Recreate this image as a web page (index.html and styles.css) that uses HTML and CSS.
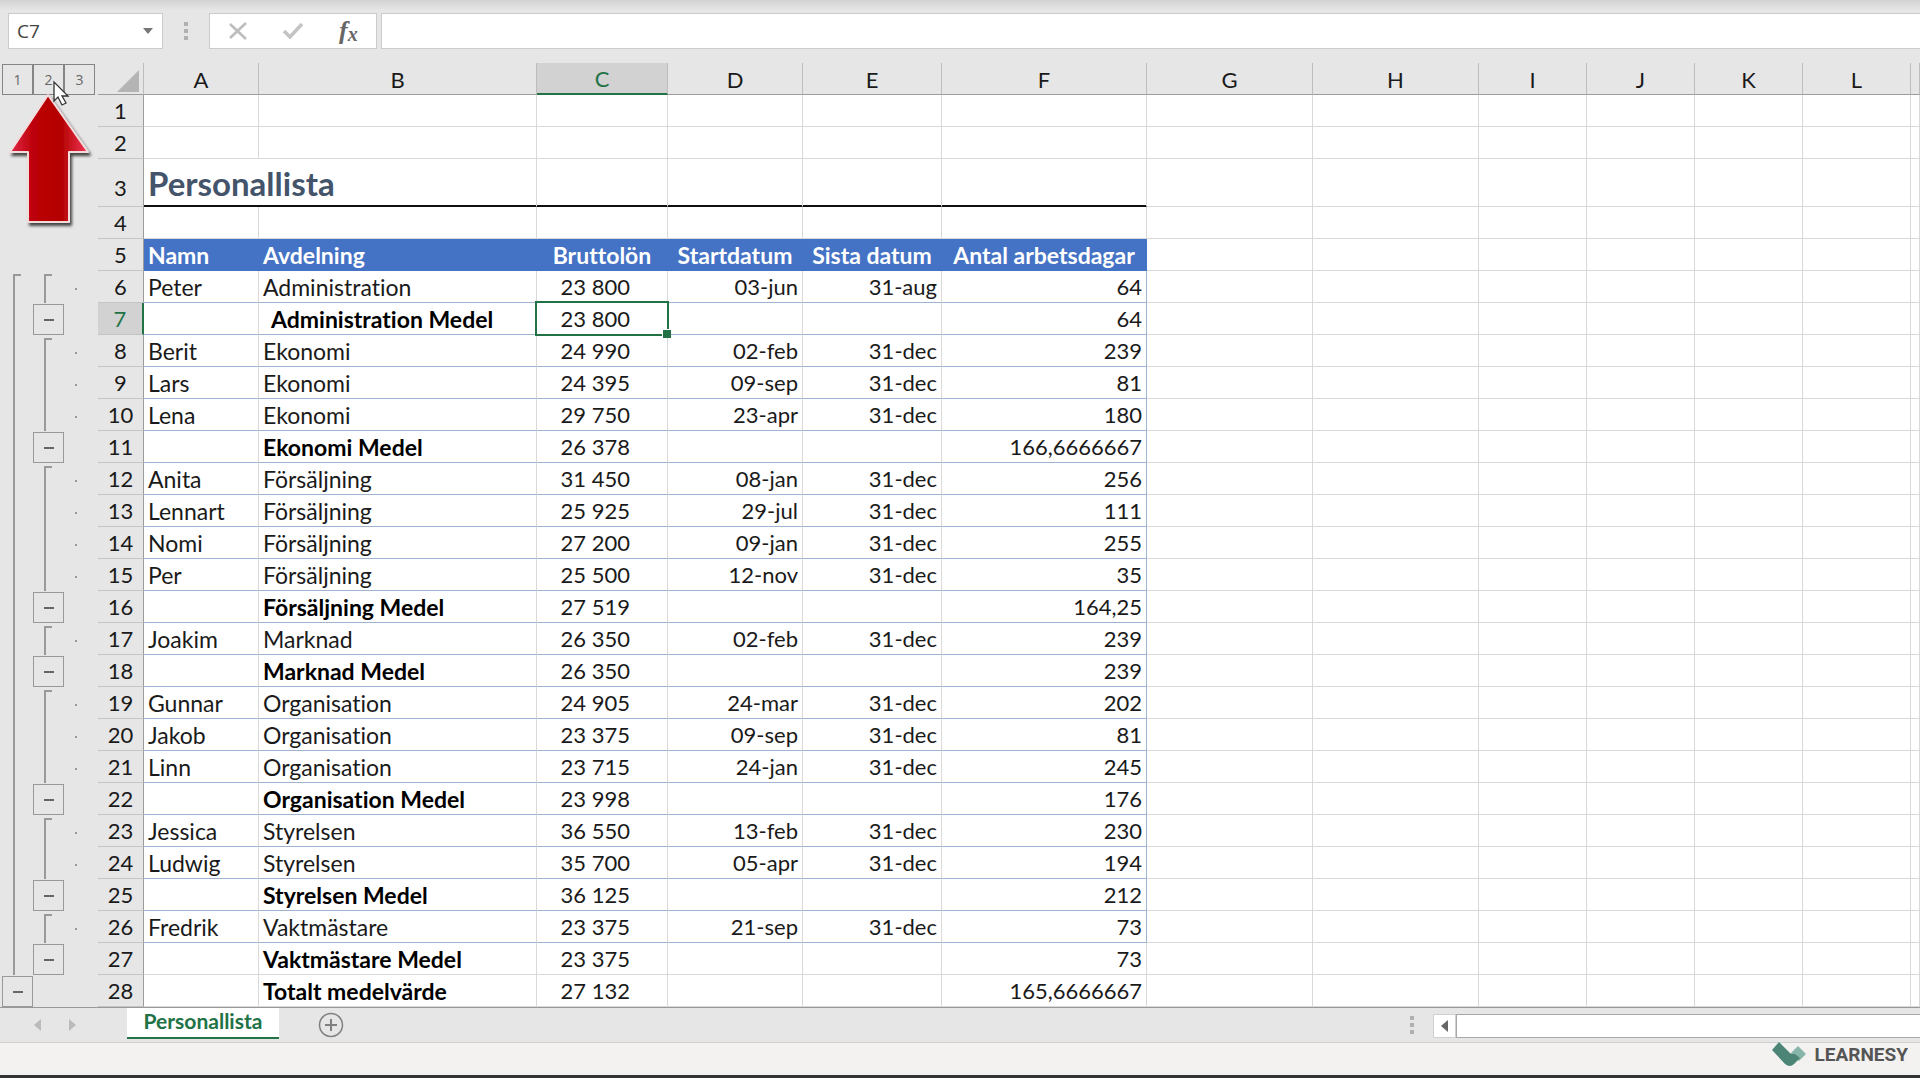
FILE: index.html
```html
<!DOCTYPE html>
<html lang="sv">
<head>
    <meta charset="UTF-8">
    <meta name="viewport" content="width=device-width, initial-scale=1.0">
    <title>Personallista</title>
    <link rel="stylesheet" href="styles.css">
</head>
<body>
    <header class="formula-bar">
        <div class="name-box">
            <input type="text" class="name-input" value="C7" aria-label="Namnruta">
            <button type="button" class="name-toggle" aria-label="Visa namn">
                <svg width="10" height="6" viewBox="0 0 10 6"><path d="M0 0h10L5 6z" fill="#777"/></svg>
            </button>
        </div>
        <div class="grip"><i></i><i></i><i></i></div>
        <div class="formula-buttons">
            <button type="button" aria-label="Avbryt">
                <svg width="20" height="18" viewBox="0 0 20 18"><path d="M2 2l16 15M18 1L2 16" fill="none" stroke="#bdbdbd" stroke-width="2.6"/></svg>
            </button>
            <button type="button" aria-label="Retur">
                <svg width="22" height="18" viewBox="0 0 22 18"><path d="M2 9l6 6L20 2" fill="none" stroke="#c4c4c4" stroke-width="3.6"/></svg>
            </button>
            <button type="button" class="fx" aria-label="Infoga funktion"><i>f</i><i class="fx-x">x</i></button>
        </div>
        <input type="text" class="formula-input" aria-label="Formelfält">
    </header>

    <main class="sheet">
        <aside class="outline">
            <div class="levels">
                <button type="button">1</button>
                <button type="button">2</button>
                <button type="button">3</button>
            </div>
            <div class="groups" id="groups"></div>
            <svg class="red-arrow" width="92" height="142" viewBox="0 0 92 142">
                <defs>
                    <linearGradient id="red" x1="0" x2="1" y1="0" y2="0">
                        <stop offset="0" stop-color="#e0284a"/>
                        <stop offset="0.3" stop-color="#bd0008"/>
                        <stop offset="0.65" stop-color="#b30000"/>
                        <stop offset="1" stop-color="#f03858"/>
                    </linearGradient>
                    <filter id="shadow" x="-20%" y="-20%" width="150%" height="150%">
                        <feDropShadow dx="2" dy="3" stdDeviation="1.5" flood-color="#000" flood-opacity="0.7"/>
                    </filter>
                </defs>
                <path d="M42 2L82 59H63v70H22V59H4z" fill="url(#red)" stroke="#f3dcdc" stroke-width="2" stroke-linejoin="round" filter="url(#shadow)"/>
            </svg>
            <svg class="cursor" width="18" height="26" viewBox="0 0 18 26">
                <path d="M2 2v19l4-4 4 8 4-2-4-7h6z" fill="#fff" stroke="#333" stroke-width="1.3"/>
            </svg>
        </aside>

        <table class="grid">
            <colgroup>
                <col class="w-head"><col class="w-a"><col class="w-b"><col class="w-c"><col class="w-d"><col class="w-e"><col class="w-f">
                <col class="w-g"><col class="w-g"><col class="w-i"><col class="w-i"><col class="w-i"><col class="w-i"><col>
            </colgroup>
            <thead>
                <tr>
                    <th class="corner"><svg width="22" height="22" viewBox="0 0 22 22"><path d="M22 0v22H0z" fill="#b4b4b4"/></svg></th>
                    <th>A</th><th>B</th><th class="selected">C</th><th>D</th><th>E</th><th>F</th>
                    <th>G</th><th>H</th><th>I</th><th>J</th><th>K</th><th>L</th><th></th>
                </tr>
            </thead>
            <tbody id="rows"></tbody>
        </table>
    </main>

    <footer>
        <div class="sheet-bar">
            <div class="tab-nav">
                <button type="button" aria-label="Föregående blad"><svg width="7" height="12" viewBox="0 0 7 12"><path d="M7 0v12L0 6z" fill="#bbb"/></svg></button>
                <button type="button" aria-label="Nästa blad"><svg width="7" height="12" viewBox="0 0 7 12"><path d="M0 0v12l7-6z" fill="#bbb"/></svg></button>
            </div>
            <button type="button" class="tab">Personallista</button>
            <button type="button" class="add-sheet" aria-label="Nytt blad">
                <svg width="26" height="26" viewBox="0 0 26 26" fill="none" stroke="#808080"><circle cx="13" cy="13" r="11.5" stroke-width="1.5"/><path d="M13 7v12M7 13h12" stroke-width="2"/></svg>
            </button>
            <div class="grip grip-scroll"><i></i><i></i><i></i></div>
            <button type="button" class="scroll-left" aria-label="Rulla åt vänster"><svg width="7" height="12" viewBox="0 0 7 12"><path d="M7 0v12L0 6z" fill="#666"/></svg></button>
            <div class="scroll-track"></div>
        </div>
        <div class="status-bar">
            <div class="brand">
                <svg width="34" height="24" viewBox="0 0 34 24">
                    <path d="M18 12l8-8 8 8-7 7z" fill="#88b5a9"/>
                    <path d="M0 8l7-8 12 12h4l5 4-6 6q-4 4-9 0z" fill="#4c8576"/>
                </svg>
                <span>LEARNESY</span>
            </div>
        </div>
        <div class="taskbar"><div class="taskbar-item"></div></div>
    </footer>
    <script src="script.js"></script>
</body>
</html>
```
FILE: styles.css
```css
* {
    box-sizing: border-box;
}
body {
    margin: 0;
    min-height: 100vh;
    display: flex;
    flex-direction: column;
    background: #e6e6e6;
    color: #1a1a1a;
    font-family: Lato, Carlito, Calibri, sans-serif;
    font-size: 22px;
    font-variant-ligatures: none;
    overflow: hidden;
}
button {
    padding: 0;
    border: 0;
    background: none;
    color: inherit;
    font: inherit;
    display: flex;
    align-items: center;
    justify-content: center;
}
svg {
    display: block;
}

/* Formula bar */
.formula-bar {
    display: flex;
    height: 63px;
    padding: 13px 0 14px 8px;
    background: linear-gradient(#d2d2d2, #e6e6e6 10px);
}
.name-box,
.formula-buttons {
    display: flex;
    background: #fff;
    border: 1px solid #cbcbcb;
}
.name-box {
    width: 155px;
}
.name-input {
    flex: 1;
    min-width: 0;
    padding: 0 0 0 8px;
    border: 0;
    background: none;
    color: #444;
    font-family: "Open Sans", sans-serif;
    font-size: 19px;
}
.name-toggle {
    width: 28px;
}
.grip {
    display: flex;
    flex-direction: column;
    justify-content: center;
    align-items: center;
    gap: 3px;
    width: 46px;
}
.grip i {
    width: 4px;
    height: 4px;
    background: #b0b0b0;
}
.formula-buttons {
    width: 168px;
}
.formula-buttons button {
    flex: 1;
}
.fx {
    color: #666;
    font-family: "Liberation Serif", serif;
    font-size: 26px;
    font-weight: bold;
    line-height: 30px;
}
.fx-x {
    font-size: 20px;
    padding-top: 6px;
}
.formula-input {
    flex: 1;
    margin-left: 4px;
    border: 1px solid #cbcbcb;
    border-right: 0;
    background: #fff;
}

/* Outline gutter */
.sheet {
    display: flex;
}
.outline {
    position: relative;
    flex: none;
    width: 98px;
    padding-left: 2px;
}
.levels {
    display: flex;
    height: 208px;
    padding-top: 1px;
    align-items: flex-start;
}
.levels button {
    width: 31px;
    height: 31px;
    border: 1px solid #858585;
    color: #666;
    font-family: "Open Sans", sans-serif;
    font-size: 14px;
}
.groups {
    display: grid;
    grid-template-columns: repeat(3, 31px);
    grid-auto-rows: 32px;
}
.bracket {
    margin: 3px 0 0 11px;
    width: 8px;
    border-left: 2px solid #999;
    border-top: 2px solid #999;
}
.collapse {
    width: 31px;
    height: 31px;
    margin-top: 1px;
    border: 1px solid #999;
    background: #e6e6e6;
}
.collapse::before {
    content: "";
    width: 10px;
    height: 2px;
    background: #666;
}
.dot {
    width: 2px;
    height: 2px;
    margin: 17px 0 0 11px;
    background: #999;
}
.red-arrow {
    position: absolute;
    left: 6px;
    top: 30px;
}
.cursor {
    position: absolute;
    left: 52px;
    top: 17px;
}

/* Cells */
.grid {
    flex: 1;
    width: 0;
    table-layout: fixed;
    border-collapse: separate;
    border-spacing: 0;
    background: #fff;
}
.w-head { width: 46px; }
.w-a { width: 115px; }
.w-b { width: 278px; }
.w-c { width: 131px; }
.w-d { width: 135px; }
.w-e { width: 139px; }
.w-f { width: 205px; }
.w-g { width: 166px; }
.w-i { width: 108px; }

.grid th,
.grid td {
    height: 32px;
    padding: 0 4px;
    line-height: 28px;
    border-right: 1px solid #d9d9d9;
    border-bottom: 1px solid #d9d9d9;
    white-space: nowrap;
    overflow: hidden;
}
.grid th {
    padding: 0;
    background: #e6e6e6;
    font-weight: normal;
    text-align: center;
}
.grid thead th {
    padding-top: 2px;
    border-right-color: #bdbdbd;
    border-bottom-color: #9c9c9c;
}
.grid tbody th {
    border-right-color: #9c9c9c;
    border-bottom-color: #c4c4c4;
}
.grid .corner svg {
    margin: 2px 0 0 19px;
}
.grid thead .selected {
    background: #d2d2d2;
    border-bottom: 2px solid #217346;
    color: #217346;
}
.grid tbody .selected {
    background: #d2d2d2;
    border-right: 2px solid #217346;
    color: #217346;
}
.grid .title-row th,
.grid .title-row td {
    height: 48px;
}
.grid .title-row th {
    padding-top: 10px;
}
.grid .title-row .title {
    color: #44546a;
    font-size: 33px;
    font-weight: bold;
    line-height: 40px;
}
.grid .title-row .ruled {
    border-bottom-color: #111;
    box-shadow: inset 0 -1px #111;
}
.grid .labels .label {
    background: #4472c4;
    border-color: #4472c4;
    color: #fff;
    font-size: 23px;
    font-weight: bold;
    text-align: center;
}
.grid .labels .label-left {
    text-align: left;
}
.grid .data td.cell {
    border-bottom-color: #9fb3d1;
}
.grid td.text {
    font-size: 23px;
}
.grid td.salary {
    padding-right: 37px;
    text-align: right;
}
.grid td.right {
    text-align: right;
}
.grid .data td.last {
    border-right-color: #9fb3d1;
}
.grid td.strong {
    color: #000;
    font-weight: bold;
}
.grid td.indent {
    padding-left: 12px;
}
.grid td.active {
    position: relative;
    overflow: visible;
}
.active::before {
    content: "";
    position: absolute;
    inset: -2px;
    border: 2px solid #217346;
}
.active::after {
    content: "";
    position: absolute;
    right: -4px;
    bottom: -4px;
    width: 8px;
    height: 8px;
    border: 1px solid #fff;
    border-width: 1px 0 0 1px;
    background: #217346;
}

/* Sheet tabs and status bar */
footer {
    display: flex;
    flex-direction: column;
    flex: 1;
}
.sheet-bar {
    display: flex;
    height: 36px;
    border-top: 1px solid #999;
    border-bottom: 1px solid #d0d0d0;
}
.tab-nav {
    display: flex;
    gap: 28px;
    width: 127px;
    padding-left: 34px;
}
.tab {
    height: 31px;
    width: 152px;
    padding-bottom: 4px;
    background: #fff;
    border-bottom: 2px solid #217346;
    color: #217346;
    font-size: 21px;
    font-weight: bold;
}
.add-sheet {
    margin-left: 39px;
}
.grip-scroll {
    margin-left: auto;
    width: 42px;
}
.scroll-left {
    width: 23px;
    height: 24px;
    margin-top: 6px;
    background: #fff;
    border: 1px solid #d0d0d0;
}
.scroll-track {
    width: 464px;
    height: 24px;
    margin-top: 6px;
    background: #fff;
    border: 1px solid #a8a8a8;
    border-right: 0;
}
.status-bar {
    display: flex;
    justify-content: flex-end;
    height: 32px;
    padding-right: 12px;
    background: #f3f2f1;
}
.brand {
    display: flex;
    align-items: center;
    gap: 9px;
    height: 22px;
    color: #555;
    font-family: Roboto, sans-serif;
    font-size: 19px;
    font-weight: bold;
}
.taskbar {
    flex: 1;
    min-height: 3px;
    background: #333;
}
.taskbar-item {
    width: 75px;
    height: 100%;
    margin-left: 41%;
    background: #666;
}
```
FILE: script.js
```js
// namn, avdelning, bruttolön, startdatum, sista datum, antal arbetsdagar
const people = [
    ['Peter', 'Administration', '23 800', '03-jun', '31-aug', '64'],
    ['', 'Administration Medel', '23 800', '', '', '64'],
    ['Berit', 'Ekonomi', '24 990', '02-feb', '31-dec', '239'],
    ['Lars', 'Ekonomi', '24 395', '09-sep', '31-dec', '81'],
    ['Lena', 'Ekonomi', '29 750', '23-apr', '31-dec', '180'],
    ['', 'Ekonomi Medel', '26 378', '', '', '166,6666667'],
    ['Anita', 'Försäljning', '31 450', '08-jan', '31-dec', '256'],
    ['Lennart', 'Försäljning', '25 925', '29-jul', '31-dec', '111'],
    ['Nomi', 'Försäljning', '27 200', '09-jan', '31-dec', '255'],
    ['Per', 'Försäljning', '25 500', '12-nov', '31-dec', '35'],
    ['', 'Försäljning Medel', '27 519', '', '', '164,25'],
    ['Joakim', 'Marknad', '26 350', '02-feb', '31-dec', '239'],
    ['', 'Marknad Medel', '26 350', '', '', '239'],
    ['Gunnar', 'Organisation', '24 905', '24-mar', '31-dec', '202'],
    ['Jakob', 'Organisation', '23 375', '09-sep', '31-dec', '81'],
    ['Linn', 'Organisation', '23 715', '24-jan', '31-dec', '245'],
    ['', 'Organisation Medel', '23 998', '', '', '176'],
    ['Jessica', 'Styrelsen', '36 550', '13-feb', '31-dec', '230'],
    ['Ludwig', 'Styrelsen', '35 700', '05-apr', '31-dec', '194'],
    ['', 'Styrelsen Medel', '36 125', '', '', '212'],
    ['Fredrik', 'Vaktmästare', '23 375', '21-sep', '31-dec', '73'],
    ['', 'Vaktmästare Medel', '23 375', '', '', '73'],
    ['', 'Totalt medelvärde', '27 132', '', '', '165,6666667']
];
const labels = ['Namn', 'Avdelning', 'Bruttolön', 'Startdatum', 'Sista datum', 'Antal arbetsdagar'];
const firstRow = 6;
const emptyCells = '<td></td>'.repeat(7);

function emptyRow(number) {
    return `<tr><th>${number}</th>${'<td></td>'.repeat(6)}${emptyCells}</tr>`;
}

function dataRow(person, index) {
    const number = firstRow + index;
    const isSummary = person[0] === '';
    const active = number === 7;
    const cells = person.map((text, col) => {
        const classes = ['cell'];
        if (col < 2) classes.push('text');
        if (col === 1 && isSummary) classes.push('strong');
        if (col === 1 && active) classes.push('indent');
        if (col === 2) classes.push('salary');
        if (col === 2 && active) classes.push('active');
        if (col > 2) classes.push('right');
        if (col === 5) classes.push('last');
        return `<td class="${classes.join(' ')}">${text}</td>`;
    }).join('');
    return `<tr class="${index < people.length - 2 ? 'data' : ''}"><th${active ? ' class="selected"' : ''}>${number}</th>${cells}${emptyCells}</tr>`;
}

// Rader
const titleRow = `<tr class="title-row"><th>3</th><td class="title ruled" colspan="2">Personallista</td>${'<td class="ruled"></td>'.repeat(4)}${emptyCells}</tr>`;
const labelRow = `<tr class="labels"><th>5</th>${labels.map((text, i) => `<td class="label${i < 2 ? ' label-left' : ''}">${text}</td>`).join('')}${emptyCells}</tr>`;
document.getElementById('rows').innerHTML =
    emptyRow(1) + emptyRow(2) + titleRow + emptyRow(4) + labelRow + people.map(dataRow).join('');

// Disposition: klammer, knappar och punkter till vänster
let outline = `<div class="bracket" style="grid-area: 1 / 1 / ${people.length} / 2"></div>`;
let start = 1;
people.forEach((person, index) => {
    const row = index + 1;
    if (person[0] !== '') {
        outline += `<div class="dot" style="grid-area: ${row} / 3"></div>`;
        return;
    }
    const total = row === people.length;
    if (!total) {
        outline += `<div class="bracket" style="grid-area: ${start} / 2 / ${row} / 3"></div>`;
    }
    outline += `<button type="button" class="collapse" aria-label="Dölj detaljer" style="grid-area: ${row} / ${total ? 1 : 2}"></button>`;
    start = row + 1;
});
document.getElementById('groups').innerHTML = outline;
```
